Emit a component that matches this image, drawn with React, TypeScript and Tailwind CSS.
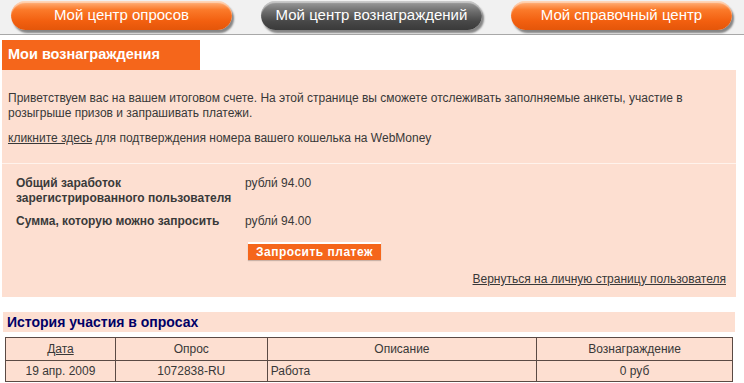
export default function App() {
  const navItems = [
    { label: 'Мой центр опросов', active: false },
    { label: 'Мой центр вознаграждений', active: true },
    { label: 'Мой справочный центр', active: false },
  ];

  return (
    <div className="w-[744px] h-[383px] overflow-hidden bg-white font-['Liberation_Sans',Arial,sans-serif] text-[12px] text-[#383838]">
      {/* ── Top nav ── */}
      <div className="h-[35px] bg-[#f1f1f1] border-b border-[#a8a8a8] flex items-start pl-[11px] gap-[29px] pt-px">
        {navItems.map(item => (
          <div
            key={item.label}
            className={
              'w-[221px] h-[29px] rounded-full flex items-center justify-center text-[15px] text-white shadow-[2px_3px_2px_rgba(0,0,0,0.45),inset_0_2px_1px_rgba(255,255,255,0.45)] ' +
              (item.active
                ? 'bg-[linear-gradient(to_bottom,#a0a0a0_0%,#6e6e6e_35%,#484848_70%,#3a3a3a_100%)]'
                : 'bg-[linear-gradient(to_bottom,#ffb884_0%,#fb7a2a_30%,#f25f0f_70%,#e4560a_100%)]')
            }
          >
            {item.label}
          </div>
        ))}
      </div>

      {/* ── Rewards ── */}
      <div className="mt-[5px] ml-[2px] w-[734px]">
        <div className="w-[198px] h-[30px] bg-[#f5661b] flex items-center pl-[6px] text-[14.5px] font-bold text-white">
          Мои вознаграждения
        </div>
        <div className="bg-[#fddfd1] h-[227px]">
          <div className="px-[6px] pt-[21px]">
            <p className="leading-[15px]">
              Приветствуем вас на вашем итоговом счете. На этой странице вы сможете отслеживать заполняемые анкеты, участие в
              <br />
              розыгрыше призов и запрашивать платежи.
            </p>
            <p className="leading-[15px] mt-[10px]">
              <span className="underline">кликните здесь</span> для подтверждения номера вашего кошелька на WebMoney
            </p>
          </div>
          <div className="mt-[17px] h-px bg-[#fff3ec]" />
          <div className="pt-[12px] pl-[14px]">
            <div className="flex leading-[15px]">
              <div className="w-[229px] font-bold text-[#3a3a3a]">
                Общий заработок
                <br />
                зарегистрированного пользователя
              </div>
              <div>рубли́ 94.00</div>
            </div>
            <div className="flex leading-[15px] mt-[8px]">
              <div className="w-[229px] font-bold text-[#3a3a3a]">Сумма, которую можно запросить</div>
              <div>рубли́ 94.00</div>
            </div>
            <div className="mt-[13px] ml-[232px] w-[133px] h-[18px] bg-[#f5661b] border-t-2 border-white flex items-center justify-center text-white font-bold text-[12px] tracking-[0.5px] shadow-[0_1px_1px_rgba(0,0,0,0.2)]">
              Запросить платеж
            </div>
          </div>
          <div className="flex justify-end pr-[10px] mt-[12px] leading-[15px]">
            <span className="underline">Вернуться на личную страницу пользователя</span>
          </div>
        </div>
      </div>

      {/* ── History ── */}
      <div className="mt-[15px] ml-[3px] w-[732px] h-[20px] bg-[#fddfd1] flex items-center pl-[4px] text-[14px] font-bold text-[#000066]">
        История участия в опросах
      </div>
      <table className="mt-[5px] ml-[5px] w-[728px] border-collapse bg-[#fddfd1] text-[12px] text-[#383838]">
        <colgroup>
          <col className="w-[110px]" />
          <col className="w-[152px]" />
          <col className="w-[270px]" />
          <col className="w-[196px]" />
        </colgroup>
        <thead>
          <tr className="h-[23px]">
            <th className="border border-[#5a4a44] font-normal text-center underline">Дата</th>
            <th className="border border-[#5a4a44] font-normal text-center">Опрос</th>
            <th className="border border-[#5a4a44] font-normal text-center">Описание</th>
            <th className="border border-[#5a4a44] font-normal text-center">Вознаграждение</th>
          </tr>
        </thead>
        <tbody>
          <tr className="h-[21px]">
            <td className="border border-[#5a4a44] text-center">19 апр. 2009</td>
            <td className="border border-[#5a4a44] text-center">1072838-RU</td>
            <td className="border border-[#5a4a44] pl-[3px]">Работа</td>
            <td className="border border-[#5a4a44] text-center">0 руб</td>
          </tr>
        </tbody>
      </table>
    </div>
  );
}
